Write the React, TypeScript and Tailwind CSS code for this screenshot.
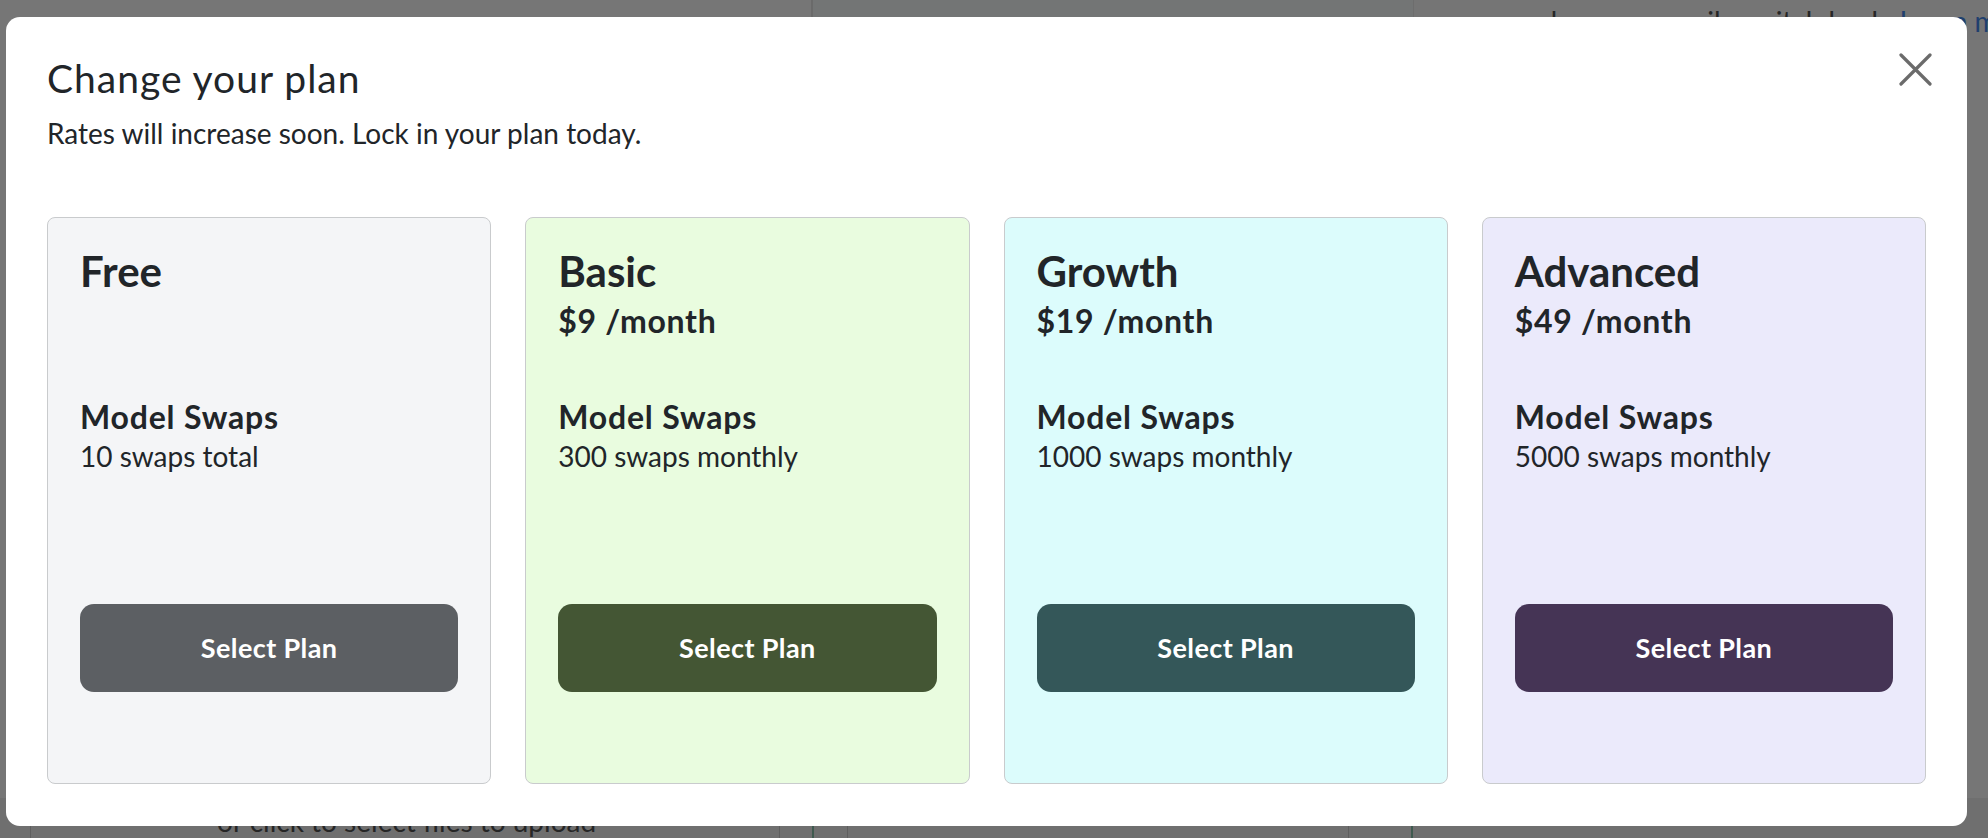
import React from "react";

type Plan = {
  name: string;
  price?: string;
  swaps: string;
  bg: string;
  btn: string;
};

const plans: Plan[] = [
  { name: "Free", swaps: "10 swaps total", bg: "bg-[#f4f5f7]", btn: "bg-[#5c5f63]" },
  { name: "Basic", price: "$9 /month", swaps: "300 swaps monthly", bg: "bg-[#e9fcdf]", btn: "bg-[#445634]" },
  { name: "Growth", price: "$19 /month", swaps: "1000 swaps monthly", bg: "bg-[#dcfcfc]", btn: "bg-[#345759]" },
  { name: "Advanced", price: "$49 /month", swaps: "5000 swaps monthly", bg: "bg-[#ebeafb]", btn: "bg-[#453455]" },
];

function PlanCard({ plan }: { plan: Plan }) {
  return (
    <div
      className={`flex h-[567px] flex-col rounded-[8px] border border-[#c9cbcd] ${plan.bg} px-[32px] pt-[28px] text-[#212529]`}
    >
      <div className="text-[42px] font-bold leading-[50px]">{plan.name}</div>
      <div className="mt-[5px] h-[40px] text-[32px] font-bold leading-[40px] tracking-[0.7px]">{plan.price ?? ""}</div>
      <div className="mt-[56px] text-[32px] font-bold leading-[40px] tracking-[0.8px]">Model Swaps</div>
      <div className="mt-[1px] text-[28px] leading-[36px]">{plan.swaps}</div>
      <button
        className={`mt-[130px] flex h-[88px] w-full items-center justify-center rounded-[14px] ${plan.btn} text-[27px] font-bold tracking-[0.4px] text-white`}
      >
        Select Plan
      </button>
    </div>
  );
}

export default function App() {
  return (
    <div
      className="relative h-[838px] w-[1988px] overflow-hidden bg-[#767676]"
      style={{ fontFamily: "Lato, 'Noto Sans', sans-serif" }}
    >
      {/* page beneath the backdrop */}
      <div className="flex h-full flex-col justify-between">
        <div className="flex h-[40px]">
          <div className="w-[813px] border-r-2 border-[#6a6a6a]" />
          <div className="w-[601px] border-r border-[#6d6d6d] bg-[#737575]" />
          <div className="flex-1 overflow-hidden whitespace-nowrap bg-[#757575] pl-[98px] pt-[1px] text-[28px] leading-[40px] text-[#262626]">
            and you can easily switch back. <span className="text-[#1f3f6e]">Learn more</span>
          </div>
        </div>
        <div className="flex h-[40px] bg-[#6f6f6f] text-[28px] leading-[40px] text-[#262626]">
          <div className="w-[31px] border-r border-[#5e5e5e]" />
          <div className="w-[749px] whitespace-nowrap border-r border-[#5e5e5e] pl-[186px] pt-[3px]">
            or click to select files to upload
          </div>
          <div className="w-[34px] border-r-2 border-[#3f5a4f]" />
          <div className="w-[34px] border-r border-[#5e5e5e]" />
          <div className="w-[501px] border-r border-[#5e5e5e]" />
          <div className="w-[64px] border-r-2 border-[#3f5a4f]" />
          <div className="flex-1" />
        </div>
      </div>

      {/* modal */}
      <div className="absolute left-[6px] top-[17px] flex h-[809px] w-[1961px] flex-col rounded-[14px] bg-white px-[41px] pt-[38px]">
        <div className="flex items-start justify-between">
          <div className="text-[#212529]">
            <div className="text-[39px] leading-[46px] tracking-[1px]">Change your plan</div>
            <div className="mt-[11px] text-[28px] leading-[42px]">Rates will increase soon. Lock in your plan today.</div>
          </div>
          <button className="-mr-[10px] -mt-[7px] flex h-[42px] w-[42px] items-center justify-center">
            <svg width="33" height="33" viewBox="0 0 33 33" fill="none">
              <path d="M2 2 L31 31 M31 2 L2 31" stroke="#6b6b6b" strokeWidth="3.2" strokeLinecap="round" />
            </svg>
          </button>
        </div>
        <div className="mt-[63px] grid grid-cols-4 gap-[34px]">
          {plans.map((p) => (
            <PlanCard key={p.name} plan={p} />
          ))}
        </div>
      </div>
    </div>
  );
}
